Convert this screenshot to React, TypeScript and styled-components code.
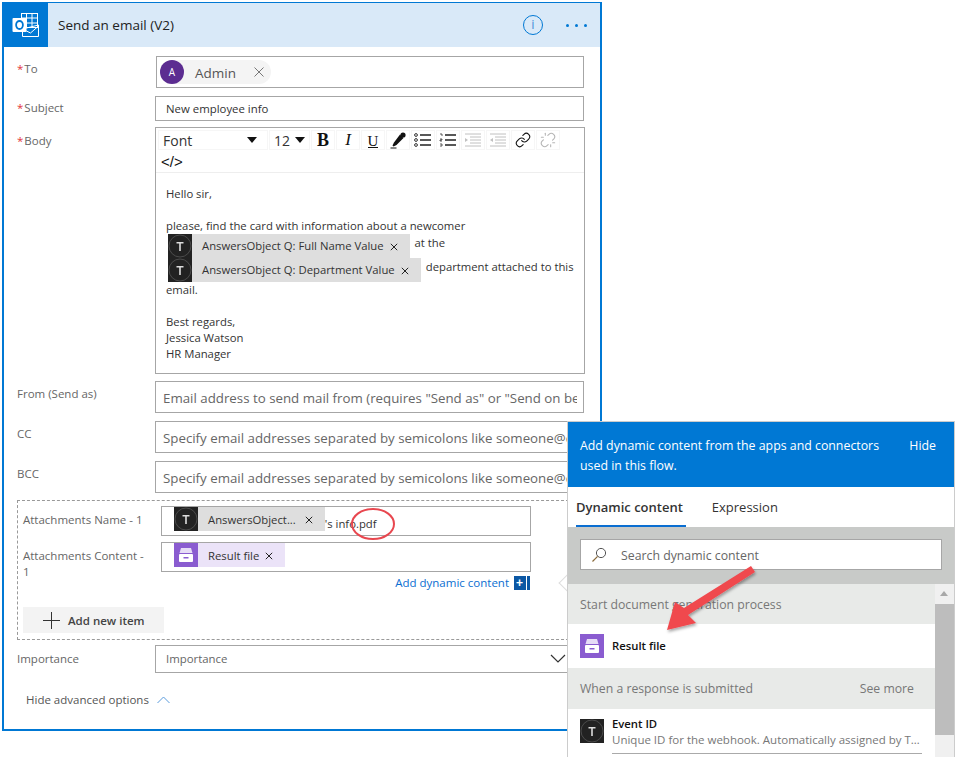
import React from "react";
import styled, { createGlobalStyle } from "styled-components";
import { Link, Unlink } from "lucide-react";

const Global = createGlobalStyle`
  html, body { margin: 0; padding: 0; height: 757px; overflow: hidden; background: #fff; }
  body { font-family: "Open Sans", "Liberation Sans", sans-serif; font-size: 11.5px; color: #333; }
  * { box-sizing: border-box; }
`;

const Page = styled.div`
  position: relative;
  width: 956px;
  height: 757px;
  padding: 2px 0 0 2px;
  overflow: hidden;
`;
const Card = styled.div`
  width: 600px;
  height: 729px;
  border: solid #0078d4;
  border-width: 1px 2px 2px 2px;
`;
const Header = styled.div`
  height: 44px;
  background: #d9e9f8;
  display: flex;
  align-items: center;
`;
const LogoTile = styled.div`
  width: 44px;
  height: 44px;
  background: #0078d4;
  display: flex;
  align-items: center;
  justify-content: center;
`;
const Title = styled.div`
  margin-left: 10px;
  font-size: 13.5px;
  color: #222;
  flex: 1;
`;
const InfoBtn = styled.div`
  width: 20px;
  height: 20px;
  border: 1.5px solid #0078d4;
  border-radius: 50%;
  color: #4a90d9;
  font-size: 13px;
  line-height: 17px;
  text-align: center;
  margin-right: 23px;
`;
const Dots = styled.div`
  display: flex;
  gap: 6px;
  margin-right: 13px;
  span {
    width: 3px;
    height: 3px;
    border-radius: 50%;
    background: #0078d4;
  }
`;
const Form = styled.div`
  padding: 9px 16px 0 13px;
  display: flex;
  flex-direction: column;
`;
const Row = styled.div<{ $gap?: number }>`
  display: grid;
  grid-template-columns: 138px 1fr;
  margin-bottom: ${(p) => p.$gap ?? 8}px;
`;
const Label = styled.div<{ $top?: number }>`
  padding-top: ${(p) => p.$top ?? 4}px;
  color: #666;
  line-height: 16px;
  b {
    color: #e3343a;
    font-weight: 400;
    margin-right: 1px;
  }
`;
const Box = styled.div<{ $h: number }>`
  height: ${(p) => p.$h}px;
  width: 429px;
  border: 1px solid #a6a6a6;
  background: #fff;
  display: flex;
  align-items: center;
  padding-left: 10px;
  font-size: 11.4px;
  color: #333;
  white-space: nowrap;
  overflow: hidden;
`;
const ToBox = styled(Box)`
  margin-left: 1px;
  width: 428px;
  padding-left: 3px;
`;
const Hint = styled(Box)`
  font-size: 13.3px;
  color: #666;
  padding: 1px 6px 0 7px;
`;
const HintText = styled.span`
  display: block;
  width: 100%;
  overflow: hidden;
`;
const Importance = styled(Box)`
  color: #666;
  padding-bottom: 1px;
`;
const Person = styled.div`
  height: 24px;
  padding-right: 7px;
  background: #f4f4f4;
  border-radius: 12px;
  display: flex;
  align-items: center;
  font-size: 13.5px;
  color: #555;
`;
const PersonName = styled.span`
  margin-top: 2px;
`;
const Avatar = styled.div`
  width: 24px;
  height: 24px;
  border-radius: 50%;
  background: #5c2d91;
  color: #fff;
  font-size: 10px;
  display: flex;
  align-items: center;
  justify-content: center;
  margin-right: 11px;
`;
const Cross = styled.svg`
  margin-left: 18px;
`;
const BodyBox = styled.div`
  width: 430px;
  height: 247px;
  border: 1px solid #a6a6a6;
  display: flex;
  flex-direction: column;
`;
const Toolbar = styled.div`
  height: 45px;
  padding: 2px 2px 0;
  border-bottom: 1px solid #eee;
  display: flex;
  flex-wrap: wrap;
  align-content: flex-start;
  gap: 2px 1px;
`;
const Select = styled.div<{ $w: number; $pr: number }>`
  width: ${(p) => p.$w}px;
  height: 20px;
  padding: 0 ${(p) => p.$pr}px 0 5px;
  display: flex;
  align-items: center;
  justify-content: space-between;
  font-size: 14px;
  color: #333;
  box-shadow: 0 0 0 1px #f6f6f6 inset;
  i {
    width: 0;
    height: 0;
    border: 5px solid transparent;
    border-top: 6px solid #111;
    border-bottom: 0;
  }
`;
const ToolBtn = styled.div<{ $off?: boolean }>`
  width: 24px;
  height: 20px;
  display: flex;
  align-items: center;
  justify-content: center;
  color: ${(p) => (p.$off ? "#b5b5b5" : "#111")};
  box-shadow: 0 0 0 1px #f6f6f6 inset;
`;
const GlyphBold = styled.span`
  font: 700 18px/20px "Liberation Serif", serif;
`;
const GlyphItalic = styled.span`
  font: italic 400 17px/20px "Liberation Serif", serif;
`;
const GlyphUnder = styled.span`
  font: 400 15px/16px "Liberation Serif", serif;
  border-bottom: 1px solid #111;
  height: 15px;
`;
const CodeBtn = styled.div`
  width: 100%;
  height: 20px;
  padding-left: 3px;
  font: 400 15px/19px "Liberation Sans", sans-serif;
  color: #111;
`;
const Editor = styled.div`
  padding: 13px 10px 0 10px;
  line-height: 16px;
  font-size: 11.3px;
  color: #333;
`;
const Line = styled.div`
  min-height: 16px;
`;
const TokenLine = styled.div`
  display: flex;
  height: 24px;
  margin-left: 2px;
  white-space: nowrap;
`;
const After = styled.span`
  margin: 1px 0 0 5px;
`;
const Token = styled.div<{ $purple?: boolean }>`
  height: 24px;
  display: flex;
  align-items: center;
  background: ${(p) => (p.$purple ? "#ebe3f8" : "#dedede")};
  padding-right: 12px;
  font-size: 11.3px;
  color: #333;
  white-space: nowrap;
`;
const TokenText = styled.span`
  margin-left: 10px;
`;
const TokenX = styled.svg<{ $gap?: number }>`
  margin: 2px 0 0 ${(p) => p.$gap ?? 6}px;
`;
const Dashed = styled.div`
  width: 567px;
  height: 140px;
  margin-bottom: 5px;
  border: 1px dashed #999;
  padding: 5px 0 0 5px;
  display: flex;
  flex-direction: column;
`;
const AttachRow = styled.div`
  display: grid;
  grid-template-columns: 138px 370px;
  margin-bottom: 6px;
`;
const AttachBox = styled.div`
  width: 370px;
  height: 30px;
  border: 1px solid #a6a6a6;
  padding-left: 12px;
  display: flex;
  align-items: flex-start;
  font-size: 11.3px;
  color: #333;
  white-space: nowrap;
`;
const Trail = styled.span`
  margin-top: 9px;
  line-height: 16px;
`;
const AddDynamic = styled.div`
  width: 507px;
  margin-top: -11px;
  display: flex;
  justify-content: flex-end;
  align-items: center;
  gap: 5px;
  color: #0a6ed1;
  line-height: 16px;
  height: 16px;
`;
const PlusTile = styled.span`
  width: 16px;
  height: 14px;
  background: linear-gradient(90deg, #0b57a4 12px, #fff 12px, #fff 13px, #0b57a4 13px);
  color: #fff;
  font: 700 12px/14px "Liberation Sans", sans-serif;
  padding-left: 2px;
`;
const AddItem = styled.div`
  margin-top: 16px;
  width: 141px;
  height: 26px;
  background: #f3f3f3;
  display: flex;
  align-items: center;
  padding-left: 20px;
  gap: 8px;
  font-weight: 600;
  color: #444;
`;
const Chevron = styled.svg`
  position: absolute;
  left: 550px;
  top: 654px;
`;
const Advanced = styled.div`
  margin: 19px 0 0 9px;
  display: flex;
  align-items: center;
  gap: 8px;
  color: #555;
  line-height: 16px;
`;

const Flyout = styled.div`
  position: absolute;
  left: 567px;
  top: 421px;
  width: 388px;
  height: 336px;
  background: #fff;
  border: 1px solid #ccc;
  border-bottom: 0;
  overflow: hidden;
`;
const Notch = styled.div`
  position: absolute;
  left: 561px;
  top: 577px;
  width: 12px;
  height: 12px;
  background: #fff;
  border: 1px solid #ddd;
  border-right: 0;
  border-top: 0;
  transform: rotate(45deg);
`;
const FlyHead = styled.div`
  height: 65px;
  background: #0078d4;
  color: #fff;
  display: flex;
  padding: 14px 18px 0 12px;
  font-size: 12.35px;
  line-height: 20px;
  justify-content: space-between;
`;
const FlyHeadText = styled.div`
  width: 310px;
`;
const Tabs = styled.div`
  height: 40px;
  display: flex;
  padding-left: 8px;
  gap: 26px;
`;
const Tab = styled.div<{ $on?: boolean }>`
  height: 40px;
  padding: 0 3px 0 0;
  line-height: 40px;
  font-size: 13px;
  font-weight: ${(p) => (p.$on ? 600 : 400)};
  color: #333;
  border-bottom: 2px solid ${(p) => (p.$on ? "#0a6ed1" : "transparent")};
`;
const SearchBand = styled.div`
  height: 57px;
  background: #c8cac8;
  padding: 12px 12px 0 12px;
`;
const SearchBox = styled.div`
  height: 31px;
  width: 362px;
  background: #fff;
  border: 1px solid #a6a6a6;
  display: flex;
  align-items: center;
  padding: 1px 0 0 10px;
  gap: 14px;
  font-size: 12.3px;
  color: #666;
`;
const Results = styled.div`
  display: grid;
  grid-template-columns: 367px 19px;
`;
const ResultList = styled.div`
  display: flex;
  flex-direction: column;
`;
const Section = styled.div<{ $h: number }>`
  height: ${(p) => p.$h}px;
  background: #e8eae8;
  padding: 0 21px 0 12px;
  display: flex;
  align-items: center;
  justify-content: space-between;
  color: #777;
  font-size: 12.25px;
`;
const Item = styled.div<{ $h: number }>`
  height: ${(p) => p.$h}px;
  padding: 10px 12px 0 12px;
  display: flex;
  gap: 8px;
`;
const ItemName = styled.div`
  font-weight: 600;
  font-size: 11.3px;
  color: #111;
  line-height: 16px;
`;
const ResultName = styled(ItemName)`
  line-height: 24px;
`;
const ItemCol = styled.div`
  margin-top: -3px;
`;
const ItemDesc = styled.div`
  width: 310px;
  color: #777;
  line-height: 16px;
  white-space: nowrap;
  overflow: hidden;
  text-overflow: ellipsis;
  padding-bottom: 5px;
  border-bottom: 1px solid #aaa;
`;
const Scroll = styled.div`
  background: #f0f0f0;
  padding-top: 20px;
  position: relative;
  &::before {
    content: "";
    position: absolute;
    left: 5px;
    top: 7px;
    border: 4px solid transparent;
    border-top: 0;
    border-bottom: 5px solid #a8a8a8;
  }
`;
const Thumb = styled.div`
  height: 131px;
  background: #bdbdbd;
`;
const Overlay = styled.svg`
  position: absolute;
  left: 0;
  top: 0;
  pointer-events: none;
`;

const SmallX = ({ gap }: { gap?: number }) => (
  <TokenX $gap={gap} width="8" height="8" viewBox="0 0 8 8">
    <path d="M.8.8l6.4 6.4M7.2.8L.8 7.2" stroke="#222" strokeWidth="1" fill="none" />
  </TokenX>
);
const TileIcon = () => (
  <svg width="24" height="24" viewBox="0 0 24 24">
    <rect width="24" height="24" fill="#222" />
    <circle cx="12" cy="12" r="11" fill="none" stroke="#555" strokeWidth="0.8" />
    <path d="M8.5 8h7v1.6h-2.7V17h-1.6V9.6H8.5z" fill="#ddd" />
  </svg>
);
const DrawerIcon = () => (
  <svg width="24" height="24" viewBox="0 0 24 24">
    <rect width="24" height="24" fill="#8a5cd0" />
    <path d="M7 5h10l1.5 5h-13z" fill="#e6dcf6" />
    <rect x="5" y="11" width="14" height="8" rx="1" fill="#fff" />
    <rect x="9.5" y="14" width="5" height="1.5" fill="#8a5cd0" />
  </svg>
);
const OutlookLogo = () => (
  <svg width="28" height="26" viewBox="0 0 28 26">
    <g fill="none" stroke="#fff" strokeWidth="1">
      <rect x="9.5" y="1.5" width="16" height="14" />
      <path d="M14.5 1.5v14M20 1.5v14M9.5 6h16M9.5 11h16" />
      <path d="M10.5 17v7.5h16V13zM10.5 17l8 4 8-7" />
    </g>
    <rect x="0.5" y="6" width="14" height="14" rx="1" fill="#fff" />
    <ellipse cx="7.5" cy="13" rx="3.4" ry="4" fill="none" stroke="#0078d4" strokeWidth="1.8" />
  </svg>
);
const Dropper = () => (
  <svg width="18" height="18" viewBox="0 0 18 18">
    <path d="M11 3.5l3.5 3.5-7 7-3 1.5-1-1 1.5-3z" fill="#111" />
    <circle cx="14" cy="4" r="2.6" fill="#111" />
    <path d="M1.5 17h6" stroke="#111" strokeWidth="1" />
  </svg>
);
const BulletList = () => (
  <svg width="18" height="14" viewBox="0 0 18 14">
    <circle cx="2" cy="2" r="1.4" fill="none" stroke="#333" />
    <circle cx="2" cy="7" r="1.4" fill="none" stroke="#333" />
    <circle cx="2" cy="12" r="1.4" fill="none" stroke="#333" />
    <path d="M6 2h11M6 7h11M6 12h11" stroke="#222" strokeWidth="1.4" />
  </svg>
);
const NumberList = () => (
  <svg width="18" height="14" viewBox="0 0 18 14">
    <path d="M1 1h2v2M1 6h2v1H1v1h2M1 11h2v2H1" stroke="#333" strokeWidth="0.8" fill="none" />
    <path d="M6 2h11M6 7h11M6 12h11" stroke="#222" strokeWidth="1.4" />
  </svg>
);
const IndentIcon = ({ out }: { out?: boolean }) => (
  <svg width="18" height="14" viewBox="0 0 18 14">
    <path d="M1 1h16M6 4h11M6 7h11M6 10h11M1 13h16" stroke="#c0c0c0" strokeWidth="1" />
    <path d={out ? "M4 5v4L1 7z" : "M1 5v4l3-2z"} fill="#c0c0c0" />
  </svg>
);

const App: React.FC = () => {
  return (
    <Page>
      <Global />
      <Card>
        <Header>
          <LogoTile>
            <OutlookLogo />
          </LogoTile>
          <Title>Send an email (V2)</Title>
          <InfoBtn>i</InfoBtn>
          <Dots>
            <span />
            <span />
            <span />
          </Dots>
        </Header>
        <Form>
          <Row>
            <Label $top={5}>
              <b>*</b>To
            </Label>
            <ToBox $h={32}>
              <Person>
                <Avatar>A</Avatar>
                <PersonName>Admin</PersonName>
                <Cross width="10" height="10" viewBox="0 0 10 10">
                  <path d="M.5.5l9 9M9.5.5l-9 9" stroke="#777" strokeWidth="1" fill="none" />
                </Cross>
              </Person>
            </ToBox>
          </Row>
          <Row $gap={6}>
            <Label>
              <b>*</b>Subject
            </Label>
            <Box $h={25}>New employee info</Box>
          </Row>
          <Row $gap={7}>
            <Label $top={6}>
              <b>*</b>Body
            </Label>
            <BodyBox>
              <Toolbar>
                <Select $w={110} $pr={11}>
                  Font
                  <i />
                </Select>
                <Select $w={41} $pr={5}>
                  12
                  <i />
                </Select>
                <ToolBtn>
                  <GlyphBold>B</GlyphBold>
                </ToolBtn>
                <ToolBtn>
                  <GlyphItalic>I</GlyphItalic>
                </ToolBtn>
                <ToolBtn>
                  <GlyphUnder>U</GlyphUnder>
                </ToolBtn>
                <ToolBtn>
                  <Dropper />
                </ToolBtn>
                <ToolBtn>
                  <BulletList />
                </ToolBtn>
                <ToolBtn>
                  <NumberList />
                </ToolBtn>
                <ToolBtn $off>
                  <IndentIcon />
                </ToolBtn>
                <ToolBtn $off>
                  <IndentIcon out />
                </ToolBtn>
                <ToolBtn>
                  <Link size={16} strokeWidth={1.6} />
                </ToolBtn>
                <ToolBtn $off>
                  <Unlink size={16} strokeWidth={1.6} />
                </ToolBtn>
                <CodeBtn>{"</>"}</CodeBtn>
              </Toolbar>
              <Editor>
                <Line>Hello sir,</Line>
                <Line />
                <Line>please, find the card with information about a newcomer</Line>
                <TokenLine>
                  <TileIcon />
                  <Token>
                    <TokenText>AnswersObject Q: Full Name Value</TokenText>
                    <SmallX />
                  </Token>
                  <After>at the</After>
                </TokenLine>
                <TokenLine>
                  <TileIcon />
                  <Token>
                    <TokenText>AnswersObject Q: Department Value</TokenText>
                    <SmallX />
                  </Token>
                  <After>department attached to this</After>
                </TokenLine>
                <Line>email.</Line>
                <Line />
                <Line>Best regards,</Line>
                <Line>Jessica Watson</Line>
                <Line>HR Manager</Line>
              </Editor>
            </BodyBox>
          </Row>
          <Row>
            <Label $top={5}>From (Send as)</Label>
            <Hint $h={32}>
              <HintText>Email address to send mail from (requires "Send as" or "Send on behalf of" permission)</HintText>
            </Hint>
          </Row>
          <Row>
            <Label $top={5}>CC</Label>
            <Hint $h={32}>
              <HintText>Specify email addresses separated by semicolons like someone@contoso.com</HintText>
            </Hint>
          </Row>
          <Row $gap={7}>
            <Label $top={5}>BCC</Label>
            <Hint $h={32}>
              <HintText>Specify email addresses separated by semicolons like someone@contoso.com</HintText>
            </Hint>
          </Row>
          <Dashed>
            <AttachRow>
              <Label $top={6}>Attachments Name - 1</Label>
              <AttachBox>
                <TileIcon />
                <Token>
                  <TokenText>AnswersObject...</TokenText>
                  <SmallX gap={9} />
                </Token>
                <Trail>'s info.pdf</Trail>
              </AttachBox>
            </AttachRow>
            <AttachRow>
              <Label $top={6}>
                Attachments Content -
                <br />1
              </Label>
              <AttachBox>
                <DrawerIcon />
                <Token $purple>
                  <TokenText>Result file</TokenText>
                  <SmallX />
                </Token>
              </AttachBox>
            </AttachRow>
            <AddDynamic>
              Add dynamic content
              <PlusTile>+</PlusTile>
            </AddDynamic>
            <AddItem>
              <svg width="17" height="17" viewBox="0 0 17 17">
                <path d="M8.5 0v17M0 8.5h17" stroke="#333" strokeWidth="1" />
              </svg>
              Add new item
            </AddItem>
          </Dashed>
          <Row $gap={0}>
            <Label $top={6}>Importance</Label>
            <Importance $h={28}>Importance</Importance>
          </Row>
          <Advanced>
            Hide advanced options
            <svg width="13" height="8" viewBox="0 0 13 8">
              <path d="M.5 7l6-6 6 6" fill="none" stroke="#5b9bdc" strokeWidth="1" />
            </svg>
          </Advanced>
        </Form>
      </Card>
      <Chevron width="16" height="10" viewBox="0 0 16 10">
        <path d="M1 1l7 7 7-7" fill="none" stroke="#333" strokeWidth="1.2" />
      </Chevron>
      <Notch />
      <Flyout>
        <FlyHead>
          <FlyHeadText>Add dynamic content from the apps and connectors used in this flow.</FlyHeadText>
          <span>Hide</span>
        </FlyHead>
        <Tabs>
          <Tab $on>Dynamic content</Tab>
          <Tab>Expression</Tab>
        </Tabs>
        <SearchBand>
          <SearchBox>
            <svg width="16" height="16" viewBox="0 0 16 16">
              <circle cx="10" cy="6" r="4.6" fill="none" stroke="#555" strokeWidth="1" />
              <path d="M6.6 9.4L1.5 14.5" stroke="#8a6a3a" strokeWidth="1.2" />
            </svg>
            Search dynamic content
          </SearchBox>
        </SearchBand>
        <Results>
          <ResultList>
            <Section $h={40}>Start document generation process</Section>
            <Item $h={44}>
              <DrawerIcon />
              <ResultName>Result file</ResultName>
            </Item>
            <Section $h={41}>
              When a response is submitted
              <span>See more</span>
            </Section>
            <Item $h={48}>
              <TileIcon />
              <ItemCol>
                <ItemName>Event ID</ItemName>
                <ItemDesc>Unique ID for the webhook. Automatically assigned by Typeform.</ItemDesc>
              </ItemCol>
            </Item>
          </ResultList>
          <Scroll>
            <Thumb />
          </Scroll>
        </Results>
      </Flyout>
      <Overlay width="956" height="757" viewBox="0 0 956 757">
        <defs>
          <filter id="arrowShadow" x="-20%" y="-20%" width="140%" height="140%">
            <feDropShadow dx="1" dy="2" stdDeviation="1.5" floodColor="#000" floodOpacity="0.35" />
          </filter>
        </defs>
        <ellipse cx="373" cy="524" rx="21" ry="15" fill="none" stroke="#e8474f" strokeWidth="2" />
        <polygon
          points="667,630 696,623 688,615 755,572 751,566 684,608 675,602"
          fill="#f0484e"
          filter="url(#arrowShadow)"
        />
      </Overlay>
    </Page>
  );
};

export default App;
